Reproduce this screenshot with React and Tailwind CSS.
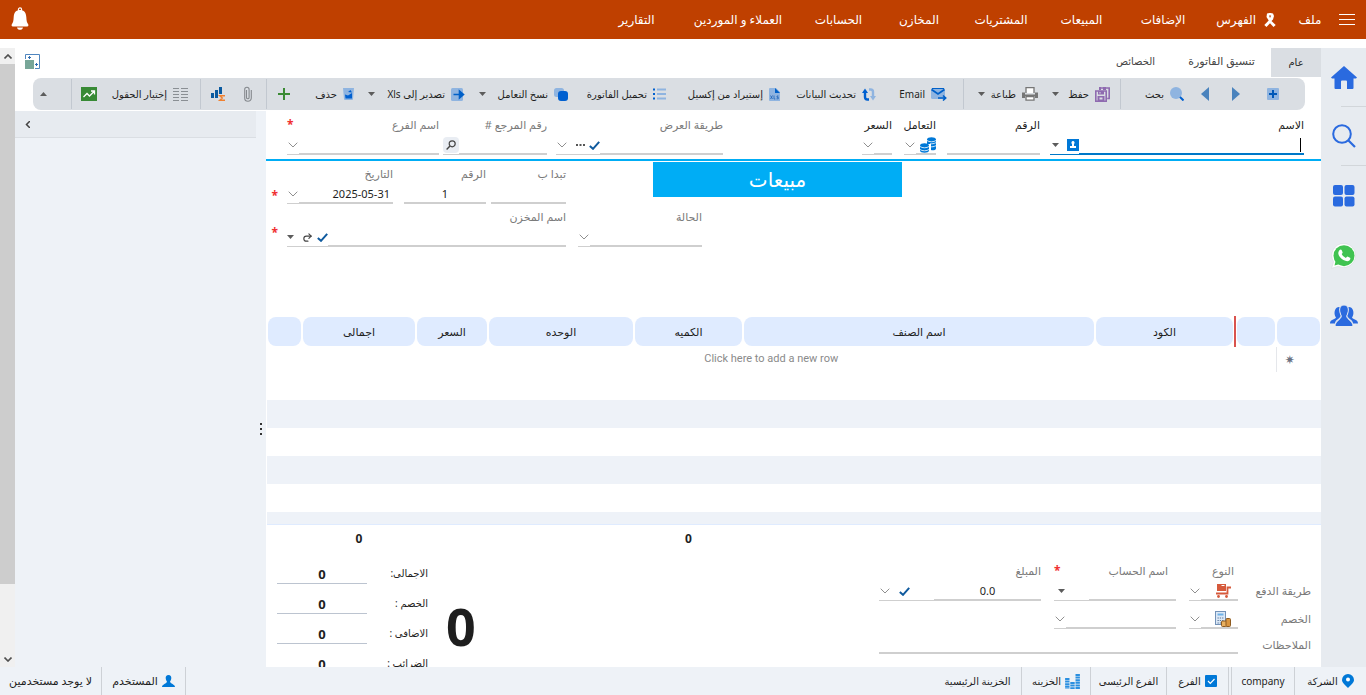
import { Redo2 } from 'lucide-react';

const Icon = ({ w = 16, h = w, box = `0 0 ${w} ${h}`, children }) => (
  <svg width={w} height={h} viewBox={box} fill="none" className="shrink-0" aria-hidden="true">{children}</svg>
);

/* ---------- header icons ---------- */
const BellIcon = () => (
  <Icon w={20} h={24}>
    <circle cx="10" cy="2.5" r="1.6" stroke="#fff" strokeWidth="1.2" />
    <path d="M10 3c4 0 6 2.6 6.300 7 .2 4 .6 5.500 1.700 7 .8 1 .4 2.500-.8 2.500H2.800c-1.200 0-1.600-1.500-.8-2.500C3.100 15.500 3.500 14 3.700 10 4 5.600 6 3 10 3z" fill="#fff" />
    <path d="M7 20.500h6c-.3 1.500-1.500 2.300-3 2.300s-2.700-.8-3-2.300z" fill="#fff" />
  </Icon>
);
const MenuIcon = () => (
  <Icon w={16} h={11}><path d="M0 .5h16M0 5.500h16M0 10.500h16" stroke="#fff" strokeWidth="1" /></Icon>
);
const RibbonIcon = () => (
  <Icon w={12} h={14}>
    <path d="M3 0.500C5-.2 7-.2 9 .5l1 2.500-1 3.500L7.500 8l4.200 4-2.200 2L6 10.200 2.500 14 .3 12l4.400-4.500L2.500 4 3 .5zM5 2.500L6 5l1.200-2.500z" fill="#fff" fillRule="evenodd" />
  </Icon>
);

/* ---------- toolbar icons ---------- */
const Caret = ({ up }) => (
  <Icon w={7} h={4}><path d={up ? 'M0 4h7L3.500 0z' : 'M0 0h7L3.500 4z'} fill="#5c5c5c" /></Icon>
);
const AddBoxIcon = () => (
  <Icon w={12}><rect width="12" height="12" rx="1" fill="#8fb4e0" /><path d="M6 2v8M2 6h8" stroke="#0058b8" strokeWidth="2" /></Icon>
);
const NextIcon = () => <Icon w={8} h={14}><path d="M0 0v14l8-7z" fill="#4a83bd" /></Icon>;
const PrevIcon = () => <Icon w={8} h={14}><path d="M8 0v14L0 7z" fill="#4a83bd" /></Icon>;
const LensIcon = () => (
  <Icon w={14}><circle cx="6" cy="6" r="6" fill="#8fb4e0" /><path d="M10 10l3.500 3.500" stroke="#0060d0" strokeWidth="2" /></Icon>
);
const SaveIcon = () => (
  <Icon w={15}>
    <path d="M.8 4h10.400v10.200H.8z" stroke="#8f6bb0" strokeWidth="1.600" />
    <path d="M4 1h10.200v10.500h-2" stroke="#8f6bb0" strokeWidth="1.600" />
    <path d="M4 0h2v3H4zM8 0h3v3H8zM3 4h6v3.500H3zM2.500 9h7v5h-7z" fill="#8f6bb0" />
    <path d="M4.500 10.500h3v2h-3zM4.500 5h1v1.500h-1z" fill="#dadee3" />
  </Icon>
);
const PrintIcon = () => (
  <Icon w={16} h={14}>
    <path d="M4 6V.7h8V6" fill="#fff" stroke="#767676" strokeWidth="1.300" />
    <path d="M0 5.500h3v2h10v-2h3V11h-3V9H3v2H0z" fill="#767676" />
    <path d="M4 9.500h8v3.700H4z" fill="#fff" stroke="#767676" strokeWidth="1.300" />
  </Icon>
);
const MailIcon = () => (
  <Icon w={16} h={13}>
    <rect width="14" height="11" rx="1.500" fill="#8fb4e0" />
    <path d="M.5 1.500L7 6l6.500-4.500" stroke="#0060c8" strokeWidth="1.800" />
    <path d="M1 0h12" stroke="#0060c8" strokeWidth="2" />
    <path d="M7 10h7M12 7.500l2.700 2.500-2.700 2.500" stroke="#0060c8" strokeWidth="1.600" />
  </Icon>
);
const RefreshIcon = () => (
  <Icon w={14} h={13}>
    <path d="M7 11.500H5.300C3.500 11.500 3 10.500 3 9V4" stroke="#0060d0" strokeWidth="2.400" />
    <path d="M0 5l3-4.500L6 5z" fill="#0060d0" />
    <path d="M7 1.500h1.700C10.500 1.500 11 2.500 11 4v5" stroke="#8fb4e0" strokeWidth="2.400" />
    <path d="M8 8l3 4.500L14 8z" fill="#8fb4e0" />
  </Icon>
);
const XlsIcon = () => (
  <Icon w={11} h={13}>
    <path d="M1 0h6l4 4v9H1a1 1 0 01-1-1V1a1 1 0 011-1z" fill="#8fb4e0" /><path d="M6 0l5 5H6z" fill="#0060c8" />
    <path d="M1.500 7.500l2 3.500m0-3.500l-2 3.500M5 7.500V11h1.300M9.500 8H8v1.300h1.300v1.500H7.500" stroke="#1b62b8" strokeWidth=".8" />
  </Icon>
);
const ListIcon = () => (
  <Icon w={13} h={12}><path d="M4 1.500h9M4 6h9M4 10.500h9" stroke="#8fb4e0" strokeWidth="1.800" /><path d="M0 1.500h2M0 6h2M0 10.500h2" stroke="#0060d0" strokeWidth="2" /></Icon>
);
const CopyIcon = () => (
  <Icon w={14} h={13}><rect width="10" height="9" rx="2.500" fill="#8fb4e0" /><rect x="4" y="3" width="10" height="10" rx="3" fill="#0060d0" /></Icon>
);
const ExportIcon = () => (
  <Icon w={14} h={13}><rect width="12" height="13" rx="1.500" fill="#8fb4e0" /><path d="M2.500 6.500H11M8.500 3l4 3.500-4 3.500z" fill="#0060c8" stroke="#0060c8" strokeWidth="1.600" /></Icon>
);
const TrashIcon = () => (
  <Icon w={11} h={12}><path d="M0 0h11l-1 11a1 1 0 01-1 1H2a1 1 0 01-1-1z" fill="#8fb4e0" /><path d="M2 6.500l3 1L9 5v5.500H2.500zM5 4l2.500-2L9 4.500z" fill="#0060d0" /></Icon>
);
const PlusIcon = () => <Icon w={12}><path d="M6 0v12M0 6h12" stroke="#3a8a34" strokeWidth="2" /></Icon>;
const ClipIcon = () => (
  <Icon w={8} h={16}><path d="M2.500 4v7.500a1.300 1.300 0 002.600 0V3.500a2.200 2.200 0 00-4.400 0V12a3.300 3.300 0 006.600 0V4" stroke="#85898e" strokeWidth="1.100" /></Icon>
);
const ChartSumIcon = () => (
  <Icon w={15} h={14}>
    <path d="M0 6h3v5H0zM4 3h3v8H4zM8 0h3v7H8z" fill="#0a5aa0" />
    <path d="M14 8.700H8.700l2.600 2.300-2.600 2.300H14" stroke="#f08030" strokeWidth="1.400" />
  </Icon>
);
const ColumnsIcon = () => (
  <Icon w={15} h={13}><path d="M0 .5h6M0 3.500h6M0 6.500h6M0 9.500h6M0 12.500h6M8 .5h7M8 3.500h7M8 6.500h7M8 9.500h7M8 12.500h7" stroke="#8a8f94" /></Icon>
);
const TrendIcon = () => (
  <Icon w={16} h={14}><rect width="16" height="14" fill="#388a35" /><path d="M2.500 10L6 6.500 8.500 9 13 4.500M10 4h3.500v3.500" stroke="#fff" strokeWidth="1.300" /></Icon>
);
const FitIcon = () => (
  <Icon w={15}>
    <path d="M.5 5V.5h14v14H10" stroke="#4f86bf" />
    <rect y="6" width="9" height="9" fill="#78a698" />
    <path d="M4.500 2v3M3 3.500h3M11.500 9v3M10 10.500h3" stroke="#2f6db0" />
  </Icon>
);

/* ---------- field icons ---------- */
const DownIcon = () => (
  <span className="mx-px flex"><Icon w={10} h={6}><path d="M.7.7L5 5 9.300.7" stroke="#8f8f8f" strokeWidth="1" /></Icon></span>
);
const TickIcon = () => <Icon w={11} h={9}><path d="M.8 5L4 7.800 10.200.8" stroke="#0f5a9e" strokeWidth="2" /></Icon>;
const DotsIcon = () => <Icon w={9} h={2}><path d="M0 0h2v2H0zM3.500 0h2v2h-2zM7 0h2v2H7z" fill="#555" /></Icon>;
const FindIcon = () => (
  <Icon w={10}><circle cx="6.200" cy="3.800" r="3" stroke="#444" strokeWidth="1.200" /><path d="M4 6L.6 9.400" stroke="#444" strokeWidth="1.400" /></Icon>
);
const ContactIcon = () => (
  <Icon w={12}><rect width="12" height="12" fill="#0078d7" /><path d="M6 2a1.700 1.700 0 011 3v2h2v2H3V7h2V5a1.700 1.700 0 011-3z" fill="#fff" /></Icon>
);
const CoinsIcon = () => (
  <Icon w={16}>
    <path d="M7 2.500c0-3 9-3 9 0v9c0 2-4 2-5 1.500V7H7z" fill="#0078d7" /><path d="M0 8.500c0-3 9-3 9 0v5c0 3-9 3-9 0z" fill="#0078d7" />
    <path d="M7 3.500c2 1.700 7 1.700 9 0M10 6.700c2 .3 4 0 6-1M10 9.700c2 .3 4 0 6-1M0 9.500c2 1.700 7 1.700 9 0M0 12.500c2 1.700 7 1.700 9 0" stroke="#fff" strokeWidth=".8" />
  </Icon>
);
const CartIcon = () => (
  <Icon w={15} h={14}>
    <path d="M1 0h9v7H1z" fill="#d65a3c" /><path d="M5.500 1.500h3" stroke="#fff" />
    <path d="M0 9.500h11.500V3.500H15" stroke="#d65a3c" strokeWidth="1.800" /><circle cx="2.500" cy="12.500" r="1.400" fill="#d65a3c" /><circle cx="10.500" cy="12.500" r="1.400" fill="#d65a3c" />
  </Icon>
);
const CalcIcon = () => (
  <Icon w={16}>
    <rect x=".5" y=".5" width="10" height="13" fill="#dce8f6" stroke="#7392b8" /><path d="M2.500 2.500h6v2h-6z" fill="#6fb2e8" />
    <path d="M2.500 7h6M2.500 9.500h6M2.500 12h4" stroke="#58779c" strokeDasharray="1.300 1" />
    <rect x="6.500" y="10" width="5" height="5.500" rx="1" fill="#e8b060" stroke="#8d5a20" /><rect x="11" y="7.500" width="4.500" height="8" rx="1" fill="#d99540" stroke="#8d5a20" />
  </Icon>
);

/* ---------- side and status icons ---------- */
const HomeIcon = () => (
  <Icon w={26} h={23}><path d="M13 0l13 11.500-1 1H22.500V22a1 1 0 01-1 1H16v-7.500a1 1 0 00-1-1h-4a1 1 0 00-1 1V23H4.500a1 1 0 01-1-1v-9.500H1l-1-1z" fill="#2a6adf" /></Icon>
);
const BigSearchIcon = () => (
  <Icon w={24}><circle cx="10" cy="10" r="8.800" stroke="#2a6adf" strokeWidth="2" /><path d="M16.500 16.500L23 23" stroke="#2a6adf" strokeWidth="2.200" /></Icon>
);
const TilesIcon = () => (
  <Icon w={22}>
    <rect width="10" height="10" rx="2" fill="#2a6adf" /><rect x="11.500" width="10" height="10" rx="2" fill="#2a6adf" />
    <rect y="11.500" width="10" height="10" rx="2" fill="#2a6adf" /><rect x="11.500" y="11.500" width="10" height="10" rx="2" fill="#2a6adf" />
  </Icon>
);
const WhatsIcon = () => (
  <Icon w={26}>
    <path d="M13 .5a12 12 0 11-5.600 22.800L.6 25.300l2-6.500A12 12 0 0113 .5z" fill="#fff" stroke="#d6dadf" strokeWidth=".6" />
    <circle cx="13" cy="12.700" r="10.500" fill="#40c351" />
    <path d="M3.500 22.500l1.200-4.800 3.400 3.600z" fill="#40c351" />
    <path d="M8.600 7c.8-.9 1.700-.7 2 0l1 2.300c.2.500-.8 1.500-.9 1.800.8 1.700 2.300 3 4.100 3.800.5-.2 1.200-1.500 1.700-1.400l2.500 1.300c.8.500.2 2-.6 2.700-1.500 1.200-3.600.9-6-.4-2.700-1.500-4.500-4-5-6.100-.3-1.600.3-3.100 1.200-4z" fill="#fff" />
  </Icon>
);
const PeopleIcon = () => (
  <Icon w={28} h={22}>
    <path d="M7 2.500c1.500-.9 2.500-.7 3 0-.9 3.500 0 6 1 8-1 3.500-5.500 3.500-6 8H0c0-4.500 5-3.500 6-6C3.500 9 4.500 4 7 2.500zM21 2.500c-1.500-.9-2.500-.7-3 0 .9 3.500 0 6-1 8 1 3.500 5.500 3.500 6 8h5c0-4.500-5-3.500-6-6 2.500-3.500 1.500-8.500-1-10z" fill="#2a6adf" />
    <path d="M14 0c3.500 0 4.800 3 4.200 6.500-.3 2-1 3.300-1.500 4.500.3 4 6.300 4.500 6.300 10.500H5c0-6 6-6.500 6.300-10.500-.5-1.200-1.200-2.500-1.500-4.500C9.200 3 10.500 0 14 0z" fill="#2a6adf" stroke="#e7ebf0" />
  </Icon>
);
const PinIcon = () => (
  <Icon w={12} h={14}><path d="M6 0a6 6 0 016 6c0 3-3.500 5-6 8-2.500-3-6-5-6-8a6 6 0 016-6z" fill="#0078d7" /><circle cx="6" cy="5.500" r="2" fill="#fff" /></Icon>
);
const CheckBoxIcon = () => (
  <Icon w={12}><rect width="12" height="12" rx="1" fill="#0078d7" /><path d="M3 6l2.300 2.300L9.500 4" stroke="#fff" strokeWidth="1.200" /></Icon>
);
const StacksIcon = () => (
  <Icon w={15}><path d="M2.300 4v11M7.500 8v7M12.700 0v15" stroke="#2a8fe0" strokeWidth="4.400" strokeDasharray="2 .6" /></Icon>
);
const UserIcon = () => (
  <Icon w={13} h={12}><path d="M6.500 0c2 0 3 1.400 2.800 3.300C9.200 4.900 8.500 6 8 6.800 8.300 8.500 13 9.500 13 12H0c0-2.500 4.700-3.500 5-5.200-.5-.8-1.200-1.900-1.300-3.500C3.500 1.400 4.500 0 6.500 0z" fill="#0078d7" /></Icon>
);

const navItems = [
  { label: 'الإضافات', cls: 'w-[82px]' },
  { label: 'المبيعات', cls: 'w-[81px]' },
  { label: 'المشتريات', cls: 'w-[80px]' },
  { label: 'المخازن', cls: 'w-[84px]' },
  { label: 'الحسابات', cls: 'w-[77px]' },
  { label: 'العملاء و الموردين', cls: 'w-[124px]' },
  { label: 'التقارير', cls: 'w-[79px]' },
];

const tools = [
  { name: 'جديد', icon: <AddBoxIcon />, cls: 'w-[39px]' },
  { name: 'التالي', icon: <NextIcon />, cls: 'w-[31px]' },
  { name: 'السابق', icon: <PrevIcon />, cls: 'w-[25px]' },
  { label: 'بحث', icon: <LensIcon />, cls: 'w-[64px] border-l' },
  { label: 'حفظ', icon: <SaveIcon />, cls: 'w-[82px] pr-[10px]', caret: true },
  { label: 'طباعة', icon: <PrintIcon />, cls: 'w-[75px] border-l', caret: true },
  { label: 'Email', icon: <MailIcon />, cls: 'w-[87px] pr-4' },
  { label: 'تحديث البيانات', icon: <RefreshIcon />, cls: 'w-[96px]' },
  { label: 'إستيراد من إكسيل', icon: <XlsIcon />, cls: 'w-[114px]' },
  { label: 'تحميل الفاتورة', icon: <ListIcon />, cls: 'w-[98px]' },
  { label: 'نسخ التعامل', icon: <CopyIcon />, cls: 'w-[103px]', caret: true },
  { label: 'تصدير إلى Xls', icon: <ExportIcon />, cls: 'w-[111px]', caret: true },
  { label: 'حذف', icon: <TrashIcon />, cls: 'w-[64px]' },
  { name: 'إضافة', icon: <PlusIcon />, cls: 'w-[24px] border-l' },
  { name: 'مرفقات', icon: <ClipIcon />, cls: 'w-[40px] pr-[14px]' },
  { name: 'إحصائيات', icon: <ChartSumIcon />, cls: 'w-[26px] border-l' },
  { label: 'إختيار الحقول', icon: <ColumnsIcon />, cls: 'w-[103px] pr-3' },
  { name: 'رسم بياني', icon: <TrendIcon />, cls: 'w-[26px] border-l' },
];

const columns = [
  { title: '', cls: 'w-[45px]' },
  { title: '', cls: 'w-[41px]' },
  { title: 'الكود', cls: 'w-[140px] border-r-2 border-[#d9534f]' },
  { title: 'اسم الصنف', cls: '' },
  { title: 'الكميه', cls: 'w-[109px]', total: '0' },
  { title: 'الوحده', cls: 'w-[146px]' },
  { title: 'السعر', cls: 'w-[72px]' },
  { title: 'اجمالى', cls: 'w-[114px]', total: '0' },
  { title: '', cls: 'w-[35px]' },
];

const totals = ['الاجمالى:', 'الخصم :', 'الاضافى :', 'الضرائب :'];

const Star = () => <span className="text-xs leading-4 font-bold text-[#f03030]">*</span>;

function Control({ id, name, select, value, active, before, children, align = 'text-center' }) {
  const line = active ? 'border-[#0078c8]' : 'border-[#cfcfcf]';
  const cls = `min-w-0 flex-1 h-full appearance-none bg-transparent outline-none border-b-2 pt-[3px] text-[11px] text-[#1e1e1e] ${line} ${align}`;
  return (
    <div className="flex h-[22px] items-stretch">
      {before && <div className={`flex items-center border-b-2 pt-[3px] ${line}`}>{before}</div>}
      {select
        ? <select id={id} aria-label={name} className={cls} defaultValue=""><option value=""></option></select>
        : <input id={id} aria-label={name} type="text" className={cls} defaultValue={value} />}
      {children && <div className={`flex items-center gap-1 border-b pt-[3px] ${line}`}>{children}</div>}
    </div>
  );
}

function Field({ id, label, cls, dark, star, ...rest }) {
  return (
    <div className={`shrink-0 ${cls}`}>
      <div className={`flex justify-between text-[11px] leading-4 whitespace-nowrap ${dark ? 'text-[#1e1e1e]' : 'text-[#7a7a7a]'}`}>
        <label htmlFor={id}>{label}</label>
        {star && <Star />}
      </div>
      <Control id={id} {...rest} />
    </div>
  );
}

function Status({ icon, label, cls }) {
  return (
    <div className={`flex h-full shrink-0 items-center justify-center gap-1 border-[#cdd1d6] whitespace-nowrap ${cls}`}>
      {icon}
      <span>{label}</span>
    </div>
  );
}

export default function App() {
  return (
    <div dir="rtl" className="flex h-screen flex-col overflow-hidden bg-white font-['Noto_Sans','DejaVu_Sans',sans-serif] text-[10px] text-[#1e1e1e]">
      <header className="flex h-[39px] shrink-0 items-center bg-[#bf4000] text-xs text-white">
        <button type="button" aria-label="القائمة" className="mr-[11px] ml-[7px]"><MenuIcon /></button>
        <nav className="flex flex-1 items-center whitespace-nowrap">
          <a href="#file" className="w-[44px] text-center">ملف</a>
          <a href="#index" className="flex w-[84px] items-center gap-2 pr-3"><RibbonIcon />الفهرس</a>
          {navItems.map((item) => (
            <a key={item.label} href="#menu" className={`text-center ${item.cls}`}>{item.label}</a>
          ))}
        </nav>
        <button type="button" aria-label="التنبيهات" className="ml-[10px] pb-[2px]"><BellIcon /></button>
      </header>

      <div className="mt-[9px] flex min-h-0 flex-1">
        <aside className="flex w-[45px] shrink-0 flex-col items-center bg-[#e7ebf0]">
          <a href="#home" aria-label="الرئيسية" className="flex h-[58px] items-center"><HomeIcon /></a>
          <div className="mr-0 ml-5 h-px self-stretch bg-[#d2d6da]" />
          <a href="#search" aria-label="بحث" className="flex h-[58px] items-center"><BigSearchIcon /></a>
          <div className="mr-0 ml-5 h-px self-stretch bg-[#d2d6da]" />
          <a href="#apps" aria-label="التطبيقات" className="flex h-[60px] items-center"><TilesIcon /></a>
          <a href="#chat" aria-label="واتساب" className="flex h-[60px] items-center"><WhatsIcon /></a>
          <a href="#people" aria-label="المستخدمين" className="flex h-[60px] items-center"><PeopleIcon /></a>
        </aside>

        <main className="flex min-w-0 flex-1 flex-col">
          <div className="flex h-[30px] shrink-0 items-center">
            <button type="button" className="h-[29px] w-[50px] self-start bg-[#dadee3]">عام</button>
            <button type="button" className="w-[99px] pb-1 text-[11px] whitespace-nowrap text-[#444]">تنسيق الفاتورة</button>
            <button type="button" className="w-[73px] pb-1 whitespace-nowrap text-[#444]">الخصائص</button>
            <button type="button" aria-label="ملاءمة" className="mr-auto ml-[10px] pb-1"><FitIcon /></button>
          </div>

          <div className="mr-4 ml-[18px] flex h-[32px] shrink-0 items-center rounded-lg bg-[#dadee3] pr-[26px]">
            {tools.map((t) => (
              <button key={t.label || t.name} type="button" aria-label={t.label || t.name} className={`flex h-[30px] shrink-0 items-center gap-[6px] border-[#c2c8d0] whitespace-nowrap ${t.cls}`}>
                {t.icon}
                {t.label && <span>{t.label}</span>}
                {t.caret && <span className="mr-auto ml-[14px]"><Caret /></span>}
              </button>
            ))}
            <button type="button" aria-label="طي" className="mr-auto ml-[7px]"><Caret up /></button>
          </div>

          <div className="mt-px flex min-h-0 flex-1">
            <section className="flex min-w-0 flex-1 flex-col overflow-hidden">
              <div className="flex shrink-0 border-b-2 border-[#00adf5] pt-[6px] pr-[17px] pb-1 pl-[21px]">
                <Field id="name" label="الاسم" dark active cls="w-[254px]" before={<span className="mr-[3px] h-[14px] w-px bg-black" />}>
                  <ContactIcon /><span className="mr-1 ml-[2px]"><Caret /></span>
                </Field>
                <Field id="number" label="الرقم" dark cls="mr-[10px] w-[93px]" />
                <Field id="deal" label="التعامل" dark select cls="mr-[11px] w-[32px]" before={<CoinsIcon />}><DownIcon /></Field>
                <Field id="price" label="السعر" dark select cls="mr-[12px] w-[30px]"><DownIcon /></Field>
                <div className="flex-1" />
                <Field id="view" label="طريقة العرض" cls="w-[167px]"><TickIcon /><DotsIcon /><span className="mr-1"><DownIcon /></span></Field>
                <Field id="ref" label="رقم المرجع #" cls="mr-[9px] w-[104px]">
                  <button type="button" aria-label="بحث" className="rounded bg-[#e9edf3] p-[3px]"><FindIcon /></button>
                </Field>
                <Field id="branch" label="اسم الفرع" select star cls="mr-1 w-[152px]"><DownIcon /></Field>
              </div>

              <div className="flex shrink-0 justify-end pl-[6px]">
                <h1 className="mt-px ml-[87px] h-[35px] w-[249px] bg-[#00adf5] text-center text-xl leading-[35px] text-white">مبيعات</h1>
                <div className="flex pt-[5px]">
                  <Field id="starts" label="تبدا ب" cls="w-[75px]" />
                  <Field id="no" label="الرقم" value="1" cls="mr-[5px] w-[82px]" />
                  <Field id="date" label="التاريخ" value="2025-05-31" align="text-right pr-[3px]" cls="mr-[11px] w-[106px]"><DownIcon /></Field>
                </div>
                <div className="w-[15px] self-end pr-[9px] leading-4"><Star /></div>
              </div>

              <div className="flex shrink-0 justify-end pt-[5px] pb-[69px] pl-[6px]">
                <Field id="state" label="الحالة" select cls="w-[124px]"><DownIcon /></Field>
                <Field id="store" label="اسم المخزن" cls="mr-[12px] w-[279px]">
                  <TickIcon /><Redo2 size={11} strokeWidth={2.5} className="text-[#444]" /><span className="mr-1"><Caret /></span>
                </Field>
                <div className="w-[15px] pt-4 pr-[9px] leading-4"><Star /></div>
              </div>

              <div className="shrink-0 pl-px">
                <table className="w-full table-fixed border-collapse">
                  <thead>
                    <tr className="h-[31px] text-[11px]">
                      {columns.map((c, i) => (
                        <th key={i} className={`p-0 px-px font-medium ${c.cls}`}>
                          <div className="h-[29px] rounded-lg bg-[#dfebff] leading-[29px]">{c.title}</div>
                        </th>
                      ))}
                    </tr>
                  </thead>
                  <tbody>
                    <tr className="h-[25px]">
                      <td className="border-l border-gray-200 p-0 pr-[18px] text-center text-xs leading-4 text-gray-500">✷</td>
                      <td colSpan={8} dir="ltr" className="p-0 text-center font-['Roboto',sans-serif] text-[11px] text-[#8a8a8a]">Click here to add a new row</td>
                    </tr>
                    <tr className="h-[28px]"><td colSpan={9} /></tr>
                    <tr className="h-[28px] bg-[#eef2f8]"><td colSpan={9} /></tr>
                    <tr className="h-[28px]"><td colSpan={9} /></tr>
                    <tr className="h-[28px] bg-[#eef2f8]"><td colSpan={9} /></tr>
                    <tr className="h-[28px]"><td colSpan={9} /></tr>
                    <tr className="h-[12px] bg-[#eef2f8]"><td colSpan={9} /></tr>
                  </tbody>
                  <tfoot>
                    <tr className="h-[30px] border-t border-[#dfebff] text-xs font-bold">
                      {columns.map((c, i) => <td key={i} className="p-0 text-center">{c.total}</td>)}
                    </tr>
                  </tfoot>
                </table>
              </div>

              <div className="flex min-h-0 flex-1 items-start overflow-hidden pl-[11px]">
                <div className="grid grid-cols-[60px_49px_122px_162px] gap-x-[13px] pt-[9px] pr-[10px] text-[11px] text-[#7a7a7a]">
                  <span />
                  <span className="pr-1 leading-4">النوع</span>
                  <span className="flex justify-between pr-2 leading-4">اسم الحساب<Star /></span>
                  <span className="leading-4">المبلغ</span>
                  <span className="pt-1 leading-4 whitespace-nowrap">طريقة الدفع</span>
                  <Control name="النوع" select before={<span className="mr-[7px]"><CartIcon /></span>}><DownIcon /></Control>
                  <Control name="اسم الحساب"><span className="mr-6 ml-1"><Caret /></span></Control>
                  <Control name="المبلغ" value="0.0"><span className="mr-6"><TickIcon /></span><span className="mr-1"><DownIcon /></span></Control>
                  <span className="pt-[10px] leading-4">الخصم</span>
                  <div className="pt-[6px]"><Control name="نوع الخصم" select before={<span className="mr-[7px]"><CalcIcon /></span>}><DownIcon /></Control></div>
                  <div className="pt-[6px]"><Control name="حساب الخصم" select><DownIcon /></Control></div>
                  <span />
                  <label htmlFor="notes" className="pt-2 leading-4">الملاحظات</label>
                  <div className="col-span-3 pt-[3px]"><Control id="notes" name="الملاحظات" /></div>
                </div>
                <div className="mr-auto flex">
                  <output className="ml-[18px] pt-[44px] text-[52px] leading-[56px] font-bold">0</output>
                  <div>
                    {totals.map((t, i) => (
                      <div key={t} className="flex h-[30px] items-end">
                        <label htmlFor={`total${i}`} className="w-[61px] pb-[1px] leading-5 whitespace-nowrap">{t}</label>
                        <input id={`total${i}`} readOnly defaultValue="0" className="h-5 w-[90px] border-b border-[#bcc4d0] text-center text-[13px] font-bold outline-none" />
                      </div>
                    ))}
                  </div>
                </div>
              </div>
            </section>

            <div className="flex w-[10px] shrink-0 items-center justify-center bg-[#eef2f7] pt-20">
              <Icon w={2} h={12}><path d="M0 0h2v2H0zM0 5h2v2H0zM0 10h2v2H0z" fill="#333" /></Icon>
            </div>
            <div className="w-[241px] shrink-0 bg-[#eef2f7]">
              <div className="flex h-[27px] items-center justify-end border-b border-[#dadee3] bg-[#e7ebf0] pl-[10px]">
                <button type="button" aria-label="توسيع"><Icon w={5} h={7}><path d="M5 0L1.500 3.500 5 7" stroke="#444" strokeWidth="1.500" /></Icon></button>
              </div>
            </div>
          </div>
        </main>

        <div className="flex w-[15px] shrink-0 flex-col items-center bg-[#f0f0f0]">
          <div className="flex h-4 items-center"><Icon w={8} h={5}><path d="M.5 4.500L4 1l3.500 3.500" stroke="#505050" strokeWidth="1.600" /></Icon></div>
          <div className="w-full flex-1 bg-[#cdcdcd]" />
          <div className="flex h-[83px] items-end pb-[5px]"><Icon w={8} h={5}><path d="M.5.5L4 4 7.500.5" stroke="#505050" strokeWidth="1.600" /></Icon></div>
        </div>
      </div>

      <footer className="flex h-[28px] shrink-0 items-center bg-[#eef2f7]">
        <Status icon={<PinIcon />} label="الشركة" cls="w-[72px] border-l" />
        <Status label="company" cls="w-[63px] border-l" />
        <Status icon={<CheckBoxIcon />} label="الفرع" cls="mr-[2px] w-[63px] border-x" />
        <Status label="الفرع الرئيسى" cls="w-[76px] border-l" />
        <Status icon={<StacksIcon />} label="الخزينه" cls="w-[69px] border-l" />
        <Status label="الخزينة الرئيسية" cls="w-[87px]" />
        <Status icon={<UserIcon />} label="المستخدم" cls="mr-auto w-[85px] border-x text-[11px]" />
        <Status label="لا يوجد مستخدمين" cls="w-[101px] text-[11px]" />
      </footer>
    </div>
  );
}
